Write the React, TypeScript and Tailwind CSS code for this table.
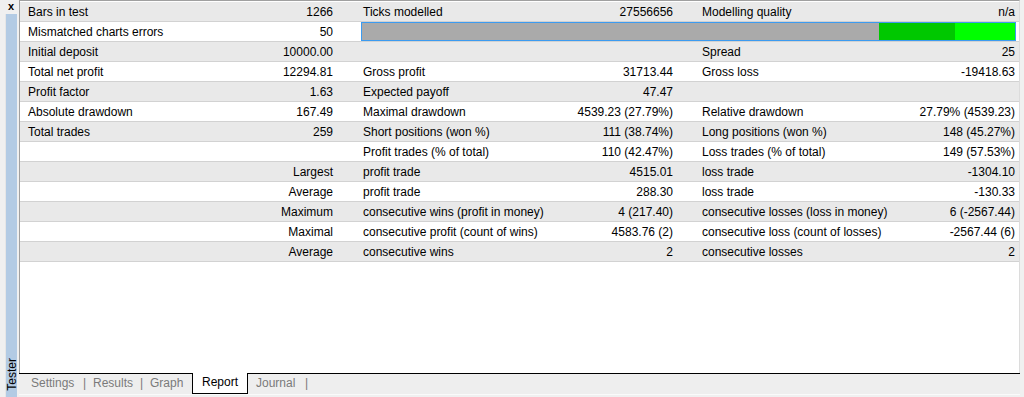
type Row = {
  l1?: string;
  v1?: string;
  l2?: string;
  v2?: string;
  l3?: string;
  v3?: string;
  bar?: boolean;
};

// Strategy tester report rows, top to bottom
const ROWS: Row[] = [
  { l1: "Bars in test", v1: "1266", l2: "Ticks modelled", v2: "27556656", l3: "Modelling quality", v3: "n/a" },
  { l1: "Mismatched charts errors", v1: "50", bar: true },
  { l1: "Initial deposit", v1: "10000.00", l3: "Spread", v3: "25" },
  { l1: "Total net profit", v1: "12294.81", l2: "Gross profit", v2: "31713.44", l3: "Gross loss", v3: "-19418.63" },
  { l1: "Profit factor", v1: "1.63", l2: "Expected payoff", v2: "47.47" },
  { l1: "Absolute drawdown", v1: "167.49", l2: "Maximal drawdown", v2: "4539.23 (27.79%)", l3: "Relative drawdown", v3: "27.79% (4539.23)" },
  { l1: "Total trades", v1: "259", l2: "Short positions (won %)", v2: "111 (38.74%)", l3: "Long positions (won %)", v3: "148 (45.27%)" },
  { l2: "Profit trades (% of total)", v2: "110 (42.47%)", l3: "Loss trades (% of total)", v3: "149 (57.53%)" },
  { v1: "Largest", l2: "profit trade", v2: "4515.01", l3: "loss trade", v3: "-1304.10" },
  { v1: "Average", l2: "profit trade", v2: "288.30", l3: "loss trade", v3: "-130.33" },
  { v1: "Maximum", l2: "consecutive wins (profit in money)", v2: "4 (217.40)", l3: "consecutive losses (loss in money)", v3: "6 (-2567.44)" },
  { v1: "Maximal", l2: "consecutive profit (count of wins)", v2: "4583.76 (2)", l3: "consecutive loss (count of losses)", v3: "-2567.44 (6)" },
  { v1: "Average", l2: "consecutive wins", v2: "2", l3: "consecutive losses", v3: "2" },
];

function ReportRow({ row, odd }: { row: Row; odd: boolean }) {
  return (
    <div
      className={`flex h-5 items-center border-b border-[#d2d2d2] ${odd ? "bg-[#e9e9e9]" : "bg-white"}`}
    >
      <div className="w-[240px] shrink-0 truncate pl-2">{row.l1}</div>
      <div className="w-[77px] shrink-0 whitespace-nowrap pr-[4px] text-right">{row.v1}</div>
      <div className="w-[24px] shrink-0" />
      {row.bar ? (
        <div className="flex h-[19px] w-[655px] shrink-0 border border-[#3c9bf0] bg-[#aaaaaa]">
          <div className="w-[517px]" />
          <div className="w-[76px] bg-[#00c800]" />
          <div className="flex-1 bg-[#00ff00]" />
        </div>
      ) : (
        <>
          <div className="w-[200px] shrink-0 whitespace-nowrap pl-[2px]">{row.l2}</div>
          <div className="w-[116px] shrink-0 whitespace-nowrap pr-[4px] text-right">{row.v2}</div>
          <div className="w-[23px] shrink-0" />
          <div className="w-[200px] shrink-0 whitespace-nowrap pl-[2px]">{row.l3}</div>
          <div className="flex-1 whitespace-nowrap pr-[4px] text-right">{row.v3}</div>
        </>
      )}
    </div>
  );
}

function Sep() {
  return <div className="w-[10px] shrink-0 leading-[19px]">|</div>;
}

export default function App() {
  return (
    <div
      className="flex h-[397px] w-[1024px] overflow-hidden bg-[#f0f0f0] text-[12px] text-black"
      style={{ fontFamily: '"Liberation Sans", Arial, sans-serif' }}
    >
      {/* Docked panel handle: close cross + vertical caption */}
      <div className="flex w-[19px] shrink-0 flex-col">
        <div className="h-[14px] pl-[8px] pt-[1px] text-[11px] font-bold leading-[10px]">x</div>
        <div className="ml-[5px] mr-[2px] flex flex-1 flex-col justify-end border-l border-[#e6e6e6] bg-[#b3cbe4] pb-[6px]">
          <span className="block -rotate-180 pr-[1px] text-[12px] leading-[11px] [writing-mode:vertical-rl]">Tester</span>
        </div>
      </div>

      <div className="flex w-[1001px] shrink-0 flex-col">
        <div className="flex flex-1 flex-col border-l border-r border-t border-l-[#a0a0a0] border-t-[#a0a0a0] border-r-[#dcdcdc] bg-white pt-[1px]">
          {ROWS.map((row, i) => (
            <ReportRow key={i} row={row} odd={i % 2 === 0} />
          ))}
        </div>

        {/* Tab strip */}
        <div className="flex h-[21px] items-start border-t border-black bg-[#eeeeee] pl-[12px] text-[#7a7a7a]">
          <div className="w-[52px] shrink-0 leading-[19px]">Settings</div>
          <Sep />
          <div className="w-[47px] shrink-0 leading-[19px]">Results</div>
          <Sep />
          <div className="w-[42px] shrink-0 leading-[19px]">Graph</div>
          <div className="-mt-[1px] h-[21px] w-[56px] shrink-0 border-x border-b border-black bg-white pl-[9px] leading-[19px] text-black">
            Report
          </div>
          <div className="ml-[8px] w-[49px] shrink-0 leading-[19px]">Journal</div>
          <Sep />
        </div>
        <div className="h-[3px] border-t border-[#fafafa]" />
      </div>
      <div className="flex-1" />
    </div>
  );
}
